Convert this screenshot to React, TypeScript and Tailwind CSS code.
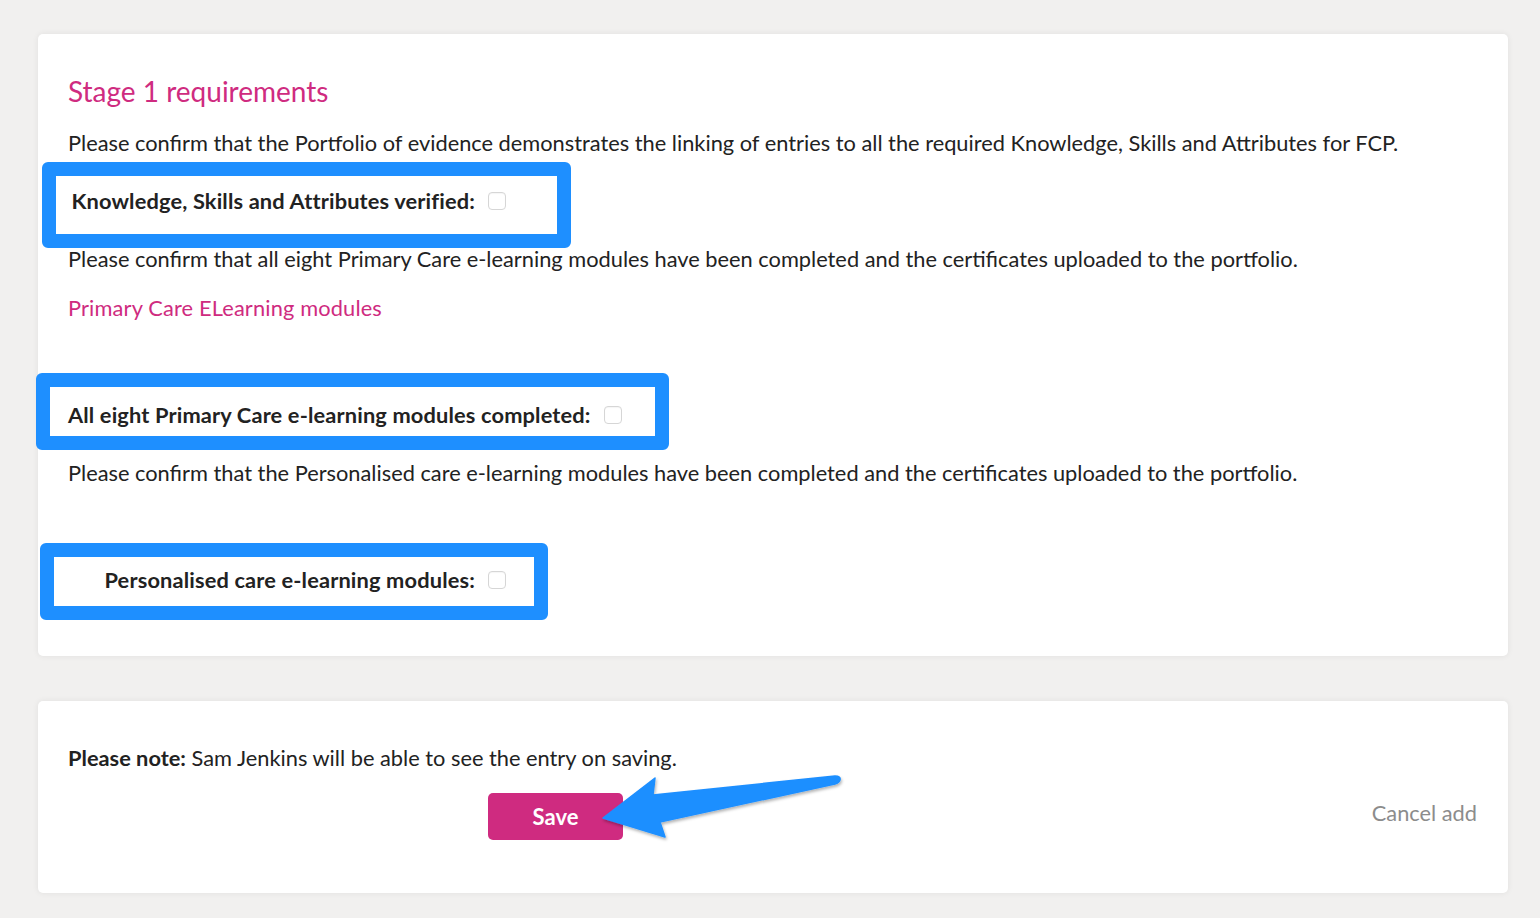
import React from 'react';

const Checkbox = () => (
  <span className="inline-block w-[18px] h-[18px] rounded-[4px] border border-[#d6d6d6] bg-white shadow-[inset_0_1px_1px_rgba(0,0,0,0.04)]" />
);

type RowProps = {
  label: string;
  boxClass: string;
  padClass: string;
};

// form row with the blue annotation frame drawn round it
const MarkedRow = ({ label, boxClass, padClass }: RowProps) => (
  <div className={`border-[14px] border-[#1e8fff] rounded-[6px] bg-white flex items-center ${boxClass}`}>
    <div className={`flex items-center ${padClass}`}>
      <span className="min-w-[407px] text-right font-bold text-[21.8px] leading-[30px] text-[#222] tracking-[0.15px]">{label}</span>
      <span className="ml-[13px] flex items-center">
        <Checkbox />
      </span>
    </div>
  </div>
);

const Arrow = () => (
  <svg
    className="absolute left-0 top-0 pointer-events-none"
    width="1540"
    height="918"
    viewBox="0 0 1540 918"
  >
    <defs>
      <filter id="arrowShadow" x="-10%" y="-30%" width="120%" height="160%">
        <feDropShadow dx="1" dy="2" stdDeviation="1.5" floodColor="#000" floodOpacity="0.3" />
      </filter>
    </defs>
    <path
      d="M603 818 L655 778 L653 795 L835 776 Q841 776 840 780 Q839 783 835 784 L660 822 L665 837 Z"
      fill="#1e8fff"
      strokeLinejoin="round"
      stroke="#1e8fff"
      strokeWidth="1.5"
      filter="url(#arrowShadow)"
    />
  </svg>
);

export default function App() {
  return (
    <div className="relative w-[1540px] h-[918px] bg-[#f1f0ef] pt-[34px] pl-[38px] pr-[32px] font-['Lato','Open_Sans',sans-serif] text-[#222] overflow-hidden">
      <div className="bg-white rounded-[5px] shadow-[0_0_6px_rgba(0,0,0,0.07)] pt-[39px] pb-[36px] pl-[30px] pr-[30px]">
        <h2 className="text-[28px] leading-[36px] text-[#cf2b80] font-normal">Stage 1 requirements</h2>
        <p className="mt-[19px] text-[21.8px] leading-[30px]">
          Please confirm that the Portfolio of evidence demonstrates the linking of entries to all the required Knowledge, Skills and Attributes for FCP.
        </p>
        <MarkedRow
          label="Knowledge, Skills and Attributes verified:"
          boxClass="mt-[4px] ml-[-26px] w-[529px] h-[86px] pb-[8px]"
          padClass="pl-[12px]"
        />
        <p className="mt-[-4px] text-[21.8px] leading-[30px]">
          Please confirm that all eight Primary Care e-learning modules have been completed and the certificates uploaded to the portfolio.
        </p>
        <p className="mt-[19px] text-[21.8px] leading-[30px] text-[#cf2b80] tracking-[0.15px]">Primary Care ELearning modules</p>
        <MarkedRow
          label="All eight Primary Care e-learning modules completed:"
          boxClass="mt-[50px] ml-[-32px] w-[633px] h-[77px] pt-[6px]"
          padClass="pl-[18px]"
        />
        <p className="mt-[8px] text-[21.8px] leading-[30px]">
          Please confirm that the Personalised care e-learning modules have been completed and the certificates uploaded to the portfolio.
        </p>
        <MarkedRow
          label="Personalised care e-learning modules:"
          boxClass="mt-[55px] ml-[-28px] w-[508px] h-[77px] pb-[4px]"
          padClass="pl-[14px]"
        />
      </div>

      <div className="mt-[45px] h-[192px] bg-white rounded-[5px] shadow-[0_0_6px_rgba(0,0,0,0.07)] pt-[42px] pl-[30px] pr-[31px]">
        <p className="text-[21.8px] leading-[30px]">
          <span className="font-bold">Please note:</span> Sam Jenkins will be able to see the entry on saving.
        </p>
        <div className="mt-[20px] flex items-start">
          <button className="ml-[420px] w-[135px] h-[47px] rounded-[5px] bg-[#cf2b80] text-white font-bold text-[22px] flex items-center justify-center">
            Save
          </button>
          <span className="ml-auto mt-[5px] text-[21.8px] leading-[30px] text-[#8c8c8c]">Cancel add</span>
        </div>
      </div>

      <Arrow />
    </div>
  );
}
